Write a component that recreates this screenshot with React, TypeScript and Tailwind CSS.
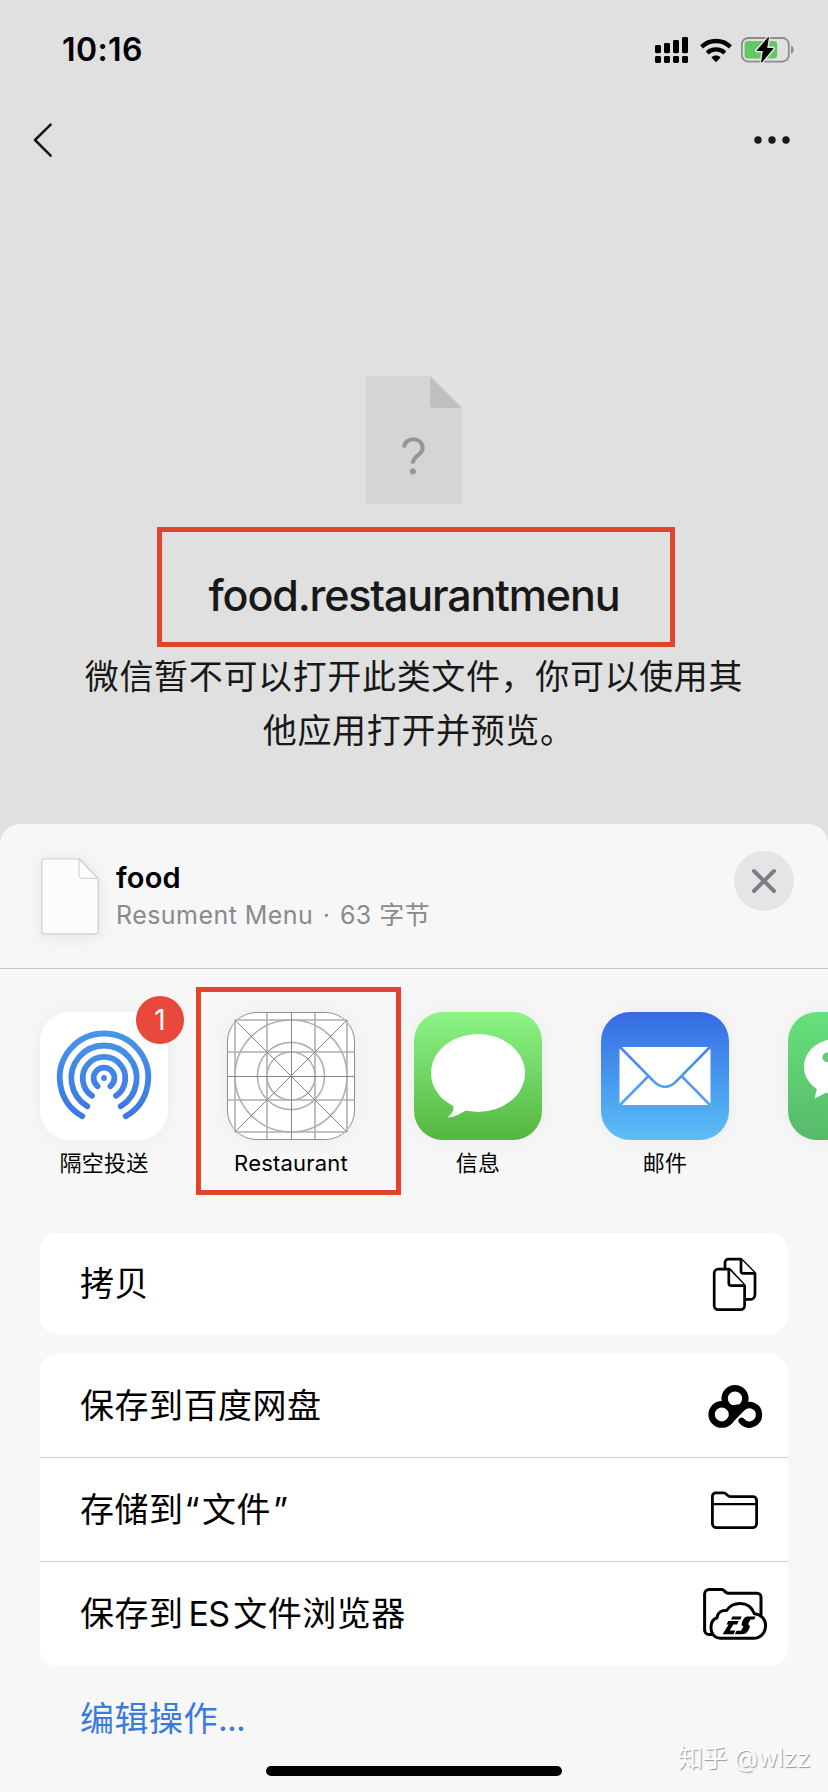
import React from "react";

const SignalIcon = () => (
  <svg className="block" width="34" height="27" viewBox="0 0 34 27" fill="#000">
    <rect x="0" y="8" width="6" height="8.2" rx="1.4" />
    <rect x="9" y="6" width="6" height="10.2" rx="1.4" />
    <rect x="18" y="3" width="6" height="13.2" rx="1.4" />
    <rect x="27" y="0" width="6" height="16.2" rx="1.4" />
    <rect x="0" y="19" width="6" height="7" rx="1.4" />
    <rect x="9" y="19" width="6" height="7" rx="1.4" />
    <rect x="18" y="19" width="6" height="7" rx="1.4" />
    <rect x="27" y="19" width="6" height="7" rx="1.4" />
  </svg>
);

const WifiIcon = () => (
  <svg className="block" width="32" height="25" viewBox="0 0 32 25" fill="none" stroke="#000">
    <path d="M1.6 8.9A20.6 20.6 0 0 1 30.4 8.9" strokeWidth="4.4" />
    <path d="M7.2 15A12.6 12.6 0 0 1 24.8 15" strokeWidth="4.4" />
    <path d="M16 24.2L11.4 19.4C13.9 17 18.1 17 20.6 19.4Z" fill="#000" stroke="none" />
  </svg>
);

const BatteryIcon = () => (
  <svg className="block" width="54" height="28" viewBox="0 0 54 28">
    <rect x="0.8" y="2" width="47" height="23.6" rx="6.4" fill="none" stroke="#8c8c8c" strokeWidth="1.8" />
    <path d="M50 9.8C53.6 10.8 53.6 16.8 50 17.8Z" fill="#8c8c8c" />
    <rect x="3.6" y="5" width="32.6" height="17.4" rx="3.4" fill="#62c766" />
    <path d="M27.6 1.2L15.8 14.6H22.2L20.4 26.4L32.4 12.4H25.8Z" fill="#000" stroke="#e0e0e0" strokeWidth="3.6" strokeLinejoin="round" />
    <path d="M27.4 1.4L16.2 14.5H22.4L20.6 26.2L32 12.5H25.6Z" fill="#000" stroke="#000" strokeWidth="1" strokeLinejoin="round" />
  </svg>
);

const BackIcon = () => (
  <svg className="block" width="20" height="36" viewBox="0 0 20 36" fill="none" stroke="#181818" strokeWidth="2.6" strokeLinecap="round" strokeLinejoin="round">
    <path d="M18.6 2.6L3 18L18.6 33.6" />
  </svg>
);

const MoreIcon = () => (
  <svg className="block" width="36" height="8" viewBox="0 0 36 8" fill="#181818">
    <circle cx="4" cy="4" r="3.7" />
    <circle cx="18" cy="4" r="3.7" />
    <circle cx="32" cy="4" r="3.7" />
  </svg>
);

const UnknownFileIcon = () => (
  <svg className="block" width="96" height="128" viewBox="0 0 96 128">
    <path d="M3 0H64L96 32V125A3 3 0 0 1 93 128H3A3 3 0 0 1 0 125V3A3 3 0 0 1 3 0Z" fill="#d5d5d5" />
    <path d="M64 0L96 32H67A3 3 0 0 1 64 29Z" fill="#bfbfbf" />
    <path d="M38.2 71.6C38.2 60.6 56.6 60.4 56.6 72C56.6 79.6 46.8 79.4 46.8 87.4" fill="none" stroke="#959595" strokeWidth="4.1" />
    <circle cx="46.9" cy="95.4" r="3" fill="#959595" />
  </svg>
);

const DocIcon = () => (
  <svg className="block drop-shadow-[0_2px_8px_rgba(0,0,0,0.08)]" width="58" height="77" viewBox="0 0 58 77" fill="#fcfcfc" stroke="#d2d2d2" strokeWidth="1.3" strokeLinejoin="round">
    <path d="M3 0.8H38L57.2 21V73.6A2.4 2.4 0 0 1 54.8 76H3A2.4 2.4 0 0 1 0.8 73.6V3A2.4 2.4 0 0 1 3 0.8Z" />
    <path d="M38 0.8V16.4A4 4 0 0 0 42 20.4H56.8Z" fill="#fff" />
  </svg>
);

const AirDropIcon = () => (
  <svg className="block" width="128" height="128" viewBox="0 0 128 128">
    <defs>
      <linearGradient id="air" gradientUnits="userSpaceOnUse" x1="0" y1="19" x2="0" y2="108">
        <stop offset="0" stopColor="#4796e8" />
        <stop offset="1" stopColor="#3a76e2" />
      </linearGradient>
    </defs>
    <g fill="none" stroke="url(#air)" strokeWidth="5.8" strokeLinecap="round">
      <path d="M42.3 104.2A44.2 44.2 0 1 1 85.7 104.2" />
      <path d="M47.3 94.3A32.7 32.7 0 1 1 80.7 94.3" />
      <path d="M52 83.8A21.3 21.3 0 1 1 76 83.8" />
      <path d="M57.6 74.2A10.4 10.4 0 1 1 70.4 74.2" />
    </g>
    <circle cx="64" cy="66" r="2.9" fill="#3f86e6" />
  </svg>
);

const GridAppIcon = () => (
  <svg className="block" width="128" height="128" viewBox="0 0 128 128">
    <rect x="0.5" y="0.5" width="127" height="127" rx="29" fill="#fff" stroke="#8e8e8e" strokeWidth="1" />
    <g fill="none" stroke="#b0b0b0" strokeWidth="1.6">
      <path d="M8 8V120M40 0.5V127.5M88 0.5V127.5M120 8V120M8 8H120M0.5 40H127.5M0.5 88H127.5M8 120H120" />
      <circle cx="64" cy="64" r="56" />
      <circle cx="64" cy="64" r="33.6" />
      <circle cx="64" cy="64" r="24" />
    </g>
    <g fill="none" stroke="#858585" strokeWidth="1">
      <path d="M64.5 0.5V127.5M0.5 64.5H127.5M8.5 8.5L119.5 119.5M119.5 8.5L8.5 119.5" />
    </g>
  </svg>
);

const MessagesIcon = () => (
  <svg className="block" width="128" height="128" viewBox="0 0 128 128" fill="#fff">
    <ellipse cx="64" cy="61" rx="47" ry="39" />
    <path d="M37 90C41.6 95 39.4 101 33.4 105.6C41 105.4 46.6 101.6 51.6 98.6L60 94Z" />
  </svg>
);

const MailIcon = () => (
  <svg className="block" width="128" height="128" viewBox="0 0 128 128" fill="none">
    <defs>
      <linearGradient id="mailLines" gradientUnits="userSpaceOnUse" x1="0" y1="0" x2="0" y2="128">
        <stop offset="0" stopColor="#3a70e6" />
        <stop offset="1" stopColor="#5cbcf4" />
      </linearGradient>
    </defs>
    <rect x="18.5" y="35" width="91" height="58" rx="3" fill="#fff" />
    <g stroke="url(#mailLines)" strokeWidth="2.6">
      <path d="M19 35L53 69.6C59.6 76.4 68.4 76.4 75 69.6L109 35" />
      <path d="M19 93L47.4 64.2M109 93L80.6 64.2" />
    </g>
  </svg>
);

const WeChatIcon = () => (
  <svg className="block" width="128" height="128" viewBox="0 0 128 128">
    <path d="M50 26.5C30.6 26.5 16 39 16 55C16 64 20.8 71.6 28.8 77L26.6 86.4L38.2 80.8C42 82 46 82.6 50 82.6C69 82.6 84 70.4 84 54.6C84 38.6 69 26.5 50 26.5Z" fill="#fff" />
    <circle cx="39.2" cy="45.4" r="4.8" fill="#5fce74" />
    <circle cx="61.6" cy="45.4" r="4.8" fill="#5fce74" />
  </svg>
);

const CopyIcon = () => (
  <svg className="block" width="68" height="56" viewBox="700 1256 68 56" fill="#fff" stroke="#000" strokeWidth="2.7" strokeLinejoin="round">
    <path d="M728.4 1259.2H741L755 1273.4V1294.4A5 5 0 0 1 750 1299.4H730A5 5 0 0 1 725 1294.4V1262.6A3.4 3.4 0 0 1 728.4 1259.2Z" />
    <path d="M741 1259.2V1271A2.4 2.4 0 0 0 743.4 1273.4H755" />
    <path d="M718.2 1269.2H729.4L744.6 1285.6V1305.6A4 4 0 0 1 740.6 1309.6H718.2A4 4 0 0 1 714.2 1305.6V1273.2A4 4 0 0 1 718.2 1269.2Z" />
    <path d="M728.8 1269.2V1283.2A2.4 2.4 0 0 0 731.2 1285.6H744.6" />
  </svg>
);

const CloudDiskIcon = () => (
  <svg className="block" width="68" height="56" viewBox="700 1378 68 56" fill="none" stroke="#000" strokeWidth="6.4" strokeLinecap="round">
    <circle cx="735" cy="1398.6" r="10.4" />
    <circle cx="721.8" cy="1414.4" r="10.2" />
    <path d="M728.6 1422L742 1408.200C749 1401.600 759 1406 759 1414.400C759 1423.600 747.600 1428.400 741.600 1420.800" />
    <path d="M726 1406L729.500 1414L730 1420L745 1406L742 1404Z" fill="#000" stroke="none" />
  </svg>
);

const FolderIcon = () => (
  <svg className="block" width="68" height="56" viewBox="700 1482 68 56" fill="none" stroke="#000" strokeWidth="2.8" strokeLinejoin="round">
    <path d="M716 1492.8H723.6C726.6 1492.800 727.4 1496.600 730.6 1496.600H753A3.600 3.600 0 0 1 756.600 1500.200V1523.600A4 4 0 0 1 752.600 1527.600H716.400A4 4 0 0 1 712.400 1523.600V1496.400A3.600 3.600 0 0 1 716 1492.800Z" />
    <path d="M712.400 1504.200H756.600" strokeWidth="2.200" />
  </svg>
);

const EsFolderIcon = () => (
  <svg className="block" width="68" height="56" viewBox="700 1585 68 56" fill="none" stroke="#000" strokeWidth="3" strokeLinejoin="round">
    <path d="M712 1633.400H709A4.400 4.400 0 0 1 704.600 1629V1593A4.600 4.600 0 0 1 709.200 1588.600H721.600C724.600 1588.600 725 1592.200 728 1592.200H757A4 4 0 0 1 761 1596.200V1614" />
    <path d="M720.400 1637.200C713.600 1637.200 710.800 1631.600 711 1626C711.200 1620.800 713.800 1617.800 717 1616.800C717.400 1611.600 722 1608.600 726.600 1609.600C729.600 1604.600 734.400 1602.400 740 1602.400C747.200 1602.400 752 1606.200 754.400 1612.800C761.200 1613.200 765.600 1618.400 765.600 1624.600C765.600 1632 760.400 1637.200 753.600 1637.200Z" fill="#fff" />
    <g stroke="none" fill="#000">
      <path d="M732.400 1615.600H741.600L740.400 1618.400H731Z" />
      <path d="M728.200 1620H738.800L737 1623.400H733.400L729.800 1629.600H735.400L733.600 1633.200H722.600L728.600 1623.400H726.600Z" />
      <path d="M747.800 1615.600H755.600L754.200 1618.600H750.600L748 1623.200C751 1624.400 749.600 1627.800 747.800 1630.200C746 1632.600 744 1633.200 741.600 1633.200H734.800L736.600 1629.800H741L743.400 1625.600C741 1624.800 741.400 1622.200 742.800 1619.600C744 1617.200 745.400 1615.600 747.800 1615.600Z" />
    </g>
  </svg>
);

type AppTile = { label: string; tile: string; icon: React.ReactNode; badge?: string };

const apps: AppTile[] = [
  { label: "隔空投送", tile: "bg-white", icon: <AirDropIcon />, badge: "1" },
  { label: "Restaurant", tile: "bg-white", icon: <GridAppIcon /> },
  { label: "信息", tile: "bg-linear-to-b from-[#8cf586] to-[#53b63f]", icon: <MessagesIcon /> },
  { label: "邮件", tile: "bg-linear-to-b from-[#376ae4] to-[#5dbff5]", icon: <MailIcon /> },
  { label: "", tile: "bg-linear-to-b from-[#67e07c] to-[#57ba69]", icon: <WeChatIcon /> },
];

const ActionRow = ({ label, icon, height = "h-[104px]" }: { label: React.ReactNode; icon: React.ReactNode; height?: string }) => (
  <div className={`flex items-center justify-between pr-5 pl-10 ${height}`}>
    <span className="text-[34px] leading-[48px] tracking-[0.5px] whitespace-nowrap text-black">{label}</span>
    {icon}
  </div>
);

export default function App() {
  return (
    <div className="relative flex h-[1792px] w-[828px] flex-col overflow-hidden bg-[#e0e0e0] font-['Inter','Noto_Sans_CJK_SC',sans-serif]">
      <header className="h-[824px] shrink-0">
        <div className="flex h-[100px] items-center justify-between pr-[33px] pl-[62px]">
          <span className="text-[32px] font-semibold tracking-[0.4px] text-black">10:16</span>
          <div className="flex items-center">
            <SignalIcon />
            <div className="ml-[11px]"><WifiIcon /></div>
            <div className="ml-[9px]"><BatteryIcon /></div>
          </div>
        </div>
        <nav className="flex h-20 items-center justify-between pr-[38px] pl-8">
          <BackIcon />
          <MoreIcon />
        </nav>
        <div className="flex flex-col items-center pt-[196px]">
          <UnknownFileIcon />
          <h1 className="mt-[63px] h-[56px] text-[43px] leading-[56px] font-medium tracking-[-1.15px] whitespace-nowrap text-[#181818]">
            food.restaurantmenu
          </h1>
          <p className="mt-[27px] flex flex-col text-[34px] leading-[54px] tracking-[0.65px] whitespace-nowrap text-[#181818]">
            <span>微信暂不可以打开此类文件，你可以使用其</span>
            <span className="pl-[178px]">他应用打开并预览。</span>
          </p>
        </div>
      </header>

      <section className="flex-1 rounded-t-[20px] bg-[#f7f7f7]">
        <div className="flex h-[145px] items-start border-b border-[#c6c6c6] pr-[34px] pl-[41px]">
          <div className="mt-[34px]"><DocIcon /></div>
          <div className="mt-[34px] ml-[17px] flex flex-col">
            <span className="text-[29px] leading-[40px] font-semibold tracking-[0.2px] text-black">food</span>
            <span className="text-[25px] leading-[34px] tracking-[0.45px] whitespace-nowrap text-[#8a8a8d]">
              Resument Menu<span className="mx-[2px]"> · </span>63 字节
            </span>
          </div>
          <button className="mt-[27px] ml-auto flex size-[60px] items-center justify-center rounded-full bg-[#e5e5e7]">
            <svg className="block" width="26" height="26" viewBox="0 0 26 26" stroke="#7d7d81" strokeWidth="4" strokeLinecap="round">
              <path d="M3 3L23 23M23 3L3 23" />
            </svg>
          </button>
        </div>

        <div className="flex h-[264px] gap-[59px] overflow-hidden pt-[43px] pl-10">
          {apps.map((app, i) => (
            <div key={i} className="relative flex w-32 shrink-0 flex-col items-center">
              <div className={`size-32 rounded-[29px] shadow-[0_0_20px_rgba(0,0,0,0.05)] ${app.tile}`}>{app.icon}</div>
              {app.badge && (
                <span className="absolute -top-4 left-24 flex size-12 items-center justify-center rounded-full bg-[#e8493b] text-[28px] text-white">
                  {app.badge}
                </span>
              )}
              <span className="mt-[7px] text-[22px] leading-[32px] tracking-[0.2px] whitespace-nowrap text-black">{app.label}</span>
            </div>
          ))}
        </div>

        <div className="mx-10 rounded-[18px] bg-white">
          <ActionRow height="h-[101px]" label="拷贝" icon={<CopyIcon />} />
        </div>
        <div className="mx-10 mt-5 divide-y divide-[#d0d0d2] overflow-hidden rounded-[18px] bg-white">
          <ActionRow label="保存到百度网盘" icon={<CloudDiskIcon />} />
          <ActionRow
            label={<>存储到<span className="mr-[2px] ml-px">“</span>文件<span className="ml-[2px]">”</span></>}
            icon={<FolderIcon />}
          />
          <ActionRow
            label={<>保存到<span className="mr-[4px] ml-[5px] tracking-[-0.7px]">ES</span>文件浏览器</>}
            icon={<EsFolderIcon />}
          />
        </div>
        <div className="mt-[29px] pl-20 text-[34px] leading-[48px] tracking-[0.5px] text-[#3b7bdc]">
          编辑操作<span className="tracking-[-0.8px]">...</span>
        </div>
      </section>

      <div className="absolute top-[527px] left-[157px] h-[120px] w-[518px] border-[5px] border-[#e0452c]" />
      <div className="absolute top-[987px] left-[196px] h-[208px] w-[205px] border-[5px] border-[#e0452c]" />
      <div className="absolute top-[1766px] left-[266px] h-[10px] w-[296px] rounded-full bg-black" />
      <div className="absolute top-[1741px] left-[678px] text-[25px] leading-[34px] tracking-[-0.4px] whitespace-nowrap text-white [text-shadow:1px_1px_1px_#999]">
        知乎 @wlzz
      </div>
    </div>
  );
}
